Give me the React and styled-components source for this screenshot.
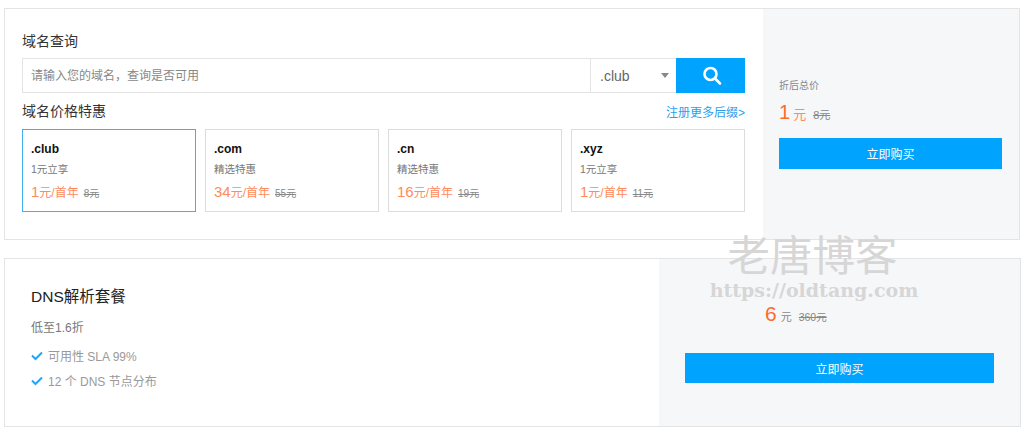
import React from 'react'
import styled, { createGlobalStyle } from 'styled-components'

const GlobalStyle = createGlobalStyle`
  html, body {
    margin: 0;
    padding: 0;
    background: #fff;
  }
  body {
    font-family: "Liberation Sans", "Noto Sans CJK SC", sans-serif;
    color: #333;
  }
  * {
    box-sizing: border-box;
  }
`

const Page = styled.div`
  position: relative;
  width: 1024px;
  height: 433px;
  overflow: hidden;
  padding: 8px 4px 0;
`

const Panel = styled.section`
  display: flex;
  width: ${(p) => p.$width}px;
  height: ${(p) => p.$height}px;
  margin-bottom: 18px;
  border: 1px solid #e4e4e4;
`

const Main = styled.div`
  flex: 1;
  min-width: 0;
  padding: ${(p) => p.$padding};
`

const Side = styled.aside`
  display: flex;
  flex-direction: column;
  width: ${(p) => p.$width}px;
  padding: ${(p) => p.$padding};
  background: #f6f7f9;
`

const Heading = styled.h2`
  margin: 0;
  font-size: 14px;
  font-weight: 400;
  line-height: 20px;
  color: #333;
`

const SearchBar = styled.div`
  display: flex;
  height: 35px;
  margin-top: 7px;
`

const SearchInput = styled.div`
  flex: 1;
  padding-left: 8px;
  border: 1px solid #e4e4e4;
  border-right: 0;
  font-size: 12px;
  line-height: 35px;
  color: #888;
`

const Select = styled.div`
  display: flex;
  align-items: center;
  justify-content: space-between;
  width: 86px;
  padding: 0 7px 0 9px;
  border: 1px solid #e4e4e4;
  border-right: 0;
  font-size: 14px;
  color: #666;
`

const Caret = styled.span`
  width: 0;
  height: 0;
  border-left: 4px solid transparent;
  border-right: 4px solid transparent;
  border-top: 5px solid #888;
`

const SearchButton = styled.button`
  display: flex;
  align-items: center;
  justify-content: center;
  width: 69px;
  padding: 0 0 0 2px;
  border: 0;
  background: #00a4ff;
`

const OfferHead = styled.div`
  display: flex;
  align-items: center;
  justify-content: space-between;
  margin-top: 8px;
`

const MoreLink = styled.a`
  font-size: 12px;
  color: #2a9ff0;
`

const Cards = styled.div`
  display: grid;
  grid-template-columns: repeat(4, 1fr);
  gap: 9px;
  margin-top: 8px;
`

const Card = styled.div`
  height: 83px;
  padding: 11px 8px 0;
  border: 1px solid ${(p) => (p.$active ? '#3fb0f0' : '#dcdcdc')};
`

const CardName = styled.div`
  font-size: 12px;
  font-weight: 700;
  line-height: 16px;
  color: #111;
`

const CardNote = styled.div`
  margin-top: 4px;
  font-size: 10.5px;
  line-height: 16px;
  color: #777;
`

const CardPrice = styled.div`
  display: flex;
  align-items: baseline;
  margin-top: 5px;
  line-height: 20px;
  color: #ff8a5c;
`

const PriceNumber = styled.span`
  font-size: 15px;
`

const PriceUnit = styled.span`
  font-size: 12px;
`

const OldPrice = styled.s`
  margin-left: ${(p) => p.$gap || 5}px;
  font-size: ${(p) => p.$size || 10}px;
  color: #888;
`

const SideLabel = styled.div`
  font-size: 10px;
  line-height: 16px;
  color: #888;
`

const Total = styled.div`
  display: flex;
  align-items: baseline;
  height: 30px;
  margin-top: ${(p) => p.$top}px;
  padding-left: ${(p) => p.$indent || 0}px;
`

const TotalNumber = styled.span`
  font-size: ${(p) => p.$size}px;
  color: #ff6a2b;
`

const TotalUnit = styled.span`
  margin-left: ${(p) => p.$gap}px;
  font-size: ${(p) => p.$size}px;
  color: ${(p) => p.$color};
`

const BuyButton = styled.button`
  width: 100%;
  height: ${(p) => p.$height}px;
  margin-top: ${(p) => p.$top}px;
  padding: 0;
  border: 0;
  background: #00a4ff;
  font-family: inherit;
  font-size: 12px;
  color: #fff;
`

const DnsTitle = styled.h2`
  margin: 0;
  font-size: 15.5px;
  font-weight: 400;
  line-height: 22px;
  color: #222;
`

const DnsNote = styled.div`
  margin-top: 12px;
  font-size: 12px;
  line-height: 16px;
  color: #777;
`

const Features = styled.ul`
  margin: 7px 0 0;
  padding: 0;
  list-style: none;
`

const Feature = styled.li`
  display: flex;
  align-items: center;
  gap: 5px;
  height: 25px;
  font-size: 12px;
  color: #999;
`

const Watermark = styled.div`
  position: absolute;
  top: 231px;
  left: 701px;
  width: 226px;
  text-align: center;
  color: #d6d6d6;
  pointer-events: none;
`

const WatermarkName = styled.div`
  margin-right: 3px;
  font-family: "Noto Sans CJK SC", sans-serif;
  font-size: 42.5px;
  font-weight: 400;
  line-height: 44px;
`

const WatermarkUrl = styled.div`
  margin-top: 6px;
  font-family: "DejaVu Serif", serif;
  font-size: 19px;
  font-weight: 700;
  line-height: 18px;
  white-space: nowrap;
`

const offers = [
  { name: '.club', note: '1元立享', price: '1', old: '8元', active: true },
  { name: '.com', note: '精选特惠', price: '34', old: '55元' },
  { name: '.cn', note: '精选特惠', price: '16', old: '19元' },
  { name: '.xyz', note: '1元立享', price: '1', old: '11元' },
]

const SearchIcon = () => (
  <svg width="20" height="20" viewBox="0 0 20 20" fill="none" stroke="#fff" strokeWidth="2.6" strokeLinecap="round">
    <circle cx="8.5" cy="8" r="6" />
    <path d="M13 12.5l5 5" />
  </svg>
)

const CheckIcon = () => (
  <svg width="12" height="10" viewBox="0 0 12 10" fill="none" stroke="#1ea7f5" strokeWidth="2">
    <path d="M1 4.5l3.5 3.5L11 1.5" />
  </svg>
)

function App() {
  return (
    <Page>
      <GlobalStyle />
      <Panel $width={1016} $height={232}>
        <Main $padding="22px 18px 0 17px">
          <Heading>域名查询</Heading>
          <SearchBar>
            <SearchInput>请输入您的域名，查询是否可用</SearchInput>
            <Select>
              .club
              <Caret />
            </Select>
            <SearchButton>
              <SearchIcon />
            </SearchButton>
          </SearchBar>
          <OfferHead>
            <Heading>域名价格特惠</Heading>
            <MoreLink>注册更多后缀&gt;</MoreLink>
          </OfferHead>
          <Cards>
            {offers.map((offer) => (
              <Card key={offer.name} $active={offer.active}>
                <CardName>{offer.name}</CardName>
                <CardNote>{offer.note}</CardNote>
                <CardPrice>
                  <PriceNumber>{offer.price}</PriceNumber>
                  <PriceUnit>元/首年</PriceUnit>
                  <OldPrice>{offer.old}</OldPrice>
                </CardPrice>
              </Card>
            ))}
          </Cards>
        </Main>
        <Side $width={256} $padding="69px 17px 0 16px">
          <SideLabel>折后总价</SideLabel>
          <Total $top={7}>
            <TotalNumber $size={20}>1</TotalNumber>
            <TotalUnit $gap={3} $size={13} $color="#ff8a5c">元</TotalUnit>
            <OldPrice $gap={7} $size={11}>8元</OldPrice>
          </Total>
          <BuyButton $height={31} $top={7}>立即购买</BuyButton>
        </Side>
      </Panel>
      <Panel $width={1017} $height={169}>
        <Main $padding="27px 26px 0">
          <DnsTitle>DNS解析套餐</DnsTitle>
          <DnsNote>低至1.6折</DnsNote>
          <Features>
            <Feature>
              <CheckIcon />
              可用性 SLA 99%
            </Feature>
            <Feature>
              <CheckIcon />
              12 个 DNS 节点分布
            </Feature>
          </Features>
        </Main>
        <Side $width={361} $padding="43px 26px 0">
          <Total $top={0} $indent={80}>
            <TotalNumber $size={21}>6</TotalNumber>
            <TotalUnit $gap={4} $size={11} $color="#888">元</TotalUnit>
            <OldPrice $gap={7} $size={10.5}>360元</OldPrice>
          </Total>
          <BuyButton $height={30} $top={21}>立即购买</BuyButton>
        </Side>
      </Panel>
      <Watermark>
        <WatermarkName>老唐博客</WatermarkName>
        <WatermarkUrl>https://oldtang.com</WatermarkUrl>
      </Watermark>
    </Page>
  )
}

export default App
